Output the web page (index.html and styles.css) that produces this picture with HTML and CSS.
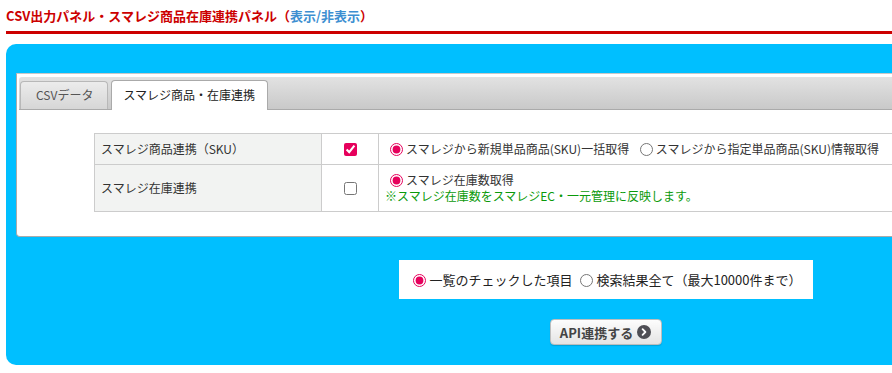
FILE: index.html
```html
<!DOCTYPE html>
<html lang="ja">
<head>
    <meta charset="UTF-8">
    <meta name="viewport" content="width=device-width, initial-scale=1.0">
    <title>スマレジ商品在庫連携</title>
    <link rel="stylesheet" href="styles.css">
</head>
<body>

<div class="page">
    <h1 class="panel-title">CSV出力パネル・スマレジ商品在庫連携パネル<span class="toggle">（<a href="#">表示/非表示</a>）</span></h1>

    <div class="csv-panel">
        <div class="tabs">
            <ul class="tab-nav">
                <li class="tab">CSVデータ</li>
                <li class="tab active">スマレジ商品・在庫連携</li>
            </ul>
            <div class="tab-body">
                <table class="sync-table">
                    <tr>
                        <th>スマレジ商品連携（SKU）</th>
                        <td class="check-cell"><input type="checkbox" checked></td>
                        <td>
                            <label><input type="radio" name="sku" checked>スマレジから新規単品商品(SKU)一括取得</label>
                            <label><input type="radio" name="sku">スマレジから指定単品商品(SKU)情報取得</label>
                        </td>
                    </tr>
                    <tr>
                        <th>スマレジ在庫連携</th>
                        <td class="check-cell"><input type="checkbox"></td>
                        <td>
                            <label><input type="radio" name="stock" checked>スマレジ在庫数取得</label>
                            <div class="note">※スマレジ在庫数をスマレジEC・一元管理に反映します。</div>
                        </td>
                    </tr>
                </table>
            </div>
        </div>

        <div class="target-row">
            <div class="target-box"><label><input type="radio" name="target" checked>一覧のチェックした項目</label> <label><input type="radio" name="target">検索結果全て（最大10000件まで）</label></div>
        </div>

        <div class="actions">
            <button class="api-btn" type="button">API連携する
                <span class="btn-icon">
                    <svg width="14" height="14" viewBox="0 0 14 14">
                        <circle cx="7" cy="7" r="7" fill="#4f4f55"/>
                        <path d="M5.6 4.2 L8.4 7 L5.6 9.8" fill="none" stroke="#fff" stroke-width="1.8" stroke-linecap="round" stroke-linejoin="round"/>
                    </svg>
                </span>
            </button>
        </div>
    </div>
</div>

</body>
</html>
```

FILE: styles.css
```css
html, body {
    overflow: hidden;
}
body {
    margin: 0;
    padding: 6px;
    font-family: "Noto Sans CJK JP", "Noto Sans", sans-serif;
    font-size: 12px;
    color: #333;
}
.page {
    width: 1200px;
}
.panel-title {
    margin: 0 0 10px;
    padding-bottom: 5px;
    font-size: 13px;
    line-height: 20px;
    font-weight: bold;
    color: #cc0000;
    border-bottom: 3px solid #cc0000;
}
.panel-title a {
    color: #3d8fd1;
    text-decoration: none;
}
.csv-panel {
    background-color: #00bfff;
    border-radius: 10px 0 0 10px;
    padding: 29px 10px 20px;
}
.tabs {
    background: #fff;
    border: 1px solid #aaa;
    border-top-color: #c8c8c8;
    border-radius: 0 0 0 4px;
    padding: 3px 2px 2px;
}
.tab-nav {
    list-style: none;
    margin: 0;
    padding: 4px 2px 0 1px;
    display: flex;
    gap: 3px;
    background: linear-gradient(#e2e2e2, #c9c9c9);
    border-bottom: 1px solid #aaa;
    border-radius: 3px 3px 0 0;
    height: 28px;
}
.tab {
    padding: 5px 14px 0 15px;
    line-height: 16px;
    color: #555;
    background: linear-gradient(#ececec, #d6d6d6);
    border: 1px solid #b8b8b8;
    border-bottom: none;
    border-radius: 4px 4px 0 0;
}
.tab.active {
    background: #fff;
    color: #222;
    margin-top: -1px;
    margin-bottom: -1px;
    padding: 6px 12px 0 11px;
    border-color: #aaa;
}
.tab-body {
    padding: 23px 75px 22px;
}
.sync-table {
    width: 100%;
    border-collapse: collapse;
}
.sync-table th, .sync-table td {
    border: 1px solid #ccc;
    padding: 7px 6px;
    line-height: 16px;
    height: 16px;
    text-align: left;
    font-weight: normal;
    white-space: nowrap;
}
.sync-table th {
    background-color: #f2f3f2;
    width: 214px;
}
.sync-table .check-cell {
    width: 44px;
    text-align: center;
}
.sync-table label {
    margin-right: 3px;
}
input[type="radio"], input[type="checkbox"] {
    accent-color: #e6005c;
    vertical-align: -2px;
    margin-top: 0;
    margin-bottom: 0;
}
.note {
    color: #0a9a0a;
}
.target-row {
    text-align: center;
    margin-top: 23px;
    line-height: 0;
}
.target-box {
    display: inline-block;
    background: #fff;
    font-size: 13px;
    line-height: 20px;
    padding: 10px 11px 9px 9px;
    color: #222;
}
.actions {
    text-align: center;
    margin-top: 20px;
}
.api-btn {
    font-family: inherit;
    font-size: 13px;
    font-weight: bold;
    color: #444;
    height: 26px;
    padding: 0 10px 0 9px;
    background: linear-gradient(#fdfdfd, #e4e4e4);
    border: 1px solid #bdbdbd;
    border-radius: 4px;
    box-shadow: 0 1px 1px rgba(0, 0, 0, 0.15);
    display: inline-flex;
    align-items: center;
    gap: 4px;
    vertical-align: top;
}
.btn-icon {
    display: inline-flex;
}
```
